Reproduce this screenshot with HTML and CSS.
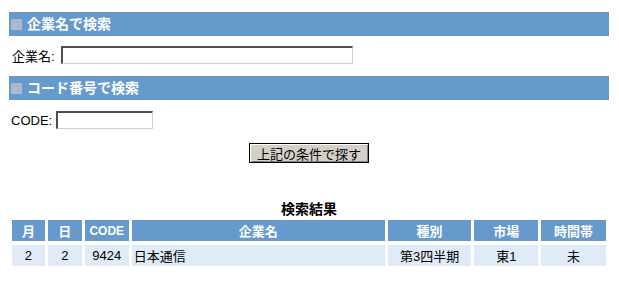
FILE: index.html
```html
<!doctype html>
<html>
<head>
<meta charset="utf-8">
<link rel="stylesheet" href="styles.css">
</head>
<body>
<div class="page">
	<div class="bar"><span class="mark"></span>企業名で検索</div>
	<div class="field">
		<label class="label label-name">企業名:</label>
		<input type="text" class="box box-name">
	</div>

	<div class="bar bar-code"><span class="mark"></span>コード番号で検索</div>
	<div class="field field-code">
		<label class="label label-code">CODE:</label>
		<input type="text" class="box box-code">
	</div>

	<div class="actions">
		<button class="btn">上記の条件で探す</button>
	</div>

	<div class="result-title">検索結果</div>
	<table class="result">
		<tr>
			<th class="c-month">月</th>
			<th class="c-day">日</th>
			<th class="c-code">CODE</th>
			<th class="c-name">企業名</th>
			<th class="c-kind">種別</th>
			<th class="c-market">市場</th>
			<th class="c-time">時間帯</th>
		</tr>
		<tr>
			<td>2</td>
			<td>2</td>
			<td>9424</td>
			<td class="left">日本通信</td>
			<td>第3四半期</td>
			<td>東1</td>
			<td>未</td>
		</tr>
	</table>
</div>
</body>
</html>
```

FILE: styles.css
```css
html{
	background:#fff;
}
body{
	margin:0px;
	font-family:"Liberation Sans","Noto Sans CJK JP",sans-serif;
	font-size:13px;
	color:#000;
}
div.page{
	width:600px;
	padding:12px 0 0 9px;
}
.bar{
	height:24px;
	line-height:24px;
	background:#6699cc;
	color:#fff;
	font-weight:bold;
	font-size:14px;
	padding-left:2px;
	display:flex;
	align-items:center;
}
.bar-code{
	margin-top:12px;
}
.mark{
	display:inline-block;
	width:11px;
	height:11px;
	background:#aabbd0;
	margin-right:5px;
}
.field{
	display:flex;
	align-items:center;
	margin-top:10px;
	height:18px;
	padding-left:3px;
}
.field-code{
	margin-top:11px;
	padding-left:2px;
}
.label{
	font-size:13px;
}
.label-name{
	margin-right:6px;
}
.label-code{
	margin-right:4px;
}
.box{
	box-sizing:border-box;
	height:18px;
	margin:0;
	padding:0 2px;
	border:1px solid #d4d0c8;
	border-top:2px solid #4e4e4e;
	border-left:2px solid #4e4e4e;
	background:#fff;
	outline:none;
}
.box-name{
	width:292px;
}
.box-code{
	width:97px;
}
.actions{
	display:flex;
	justify-content:center;
	margin-top:14px;
}
.btn{
	box-sizing:border-box;
	width:120px;
	height:20px;
	padding:0;
	background:#d4d0c8;
	border:1px solid #000;
	box-shadow:inset 1px 1px #fff, inset -1px -1px #808080;
	font-family:"Liberation Sans","Noto Sans CJK JP",sans-serif;
	font-size:13px;
	color:#000;
}
.result-title{
	margin-top:38px;
	text-align:center;
	font-weight:bold;
	font-size:14px;
	line-height:16px;
}
table.result{
	border-spacing:3px 4px;
	margin-top:-1px;
	font-size:13px;
}
.result th{
	background:#6699cc;
	color:#fff;
	font-weight:bold;
	height:21px;
	padding:0;
	text-align:center;
}
.result td{
	background:#e0ebf7;
	height:21px;
	padding:0;
	text-align:center;
}
.result td.left{
	text-align:left;
	padding-left:2px;
}
.c-month{width:33px;}
.c-day{width:34px;}
.c-code{width:44px;font-size:12px;}
.c-name{width:254px;}
.c-kind{width:84px;}
.c-market{width:64px;}
.c-time{width:65px;}
```
